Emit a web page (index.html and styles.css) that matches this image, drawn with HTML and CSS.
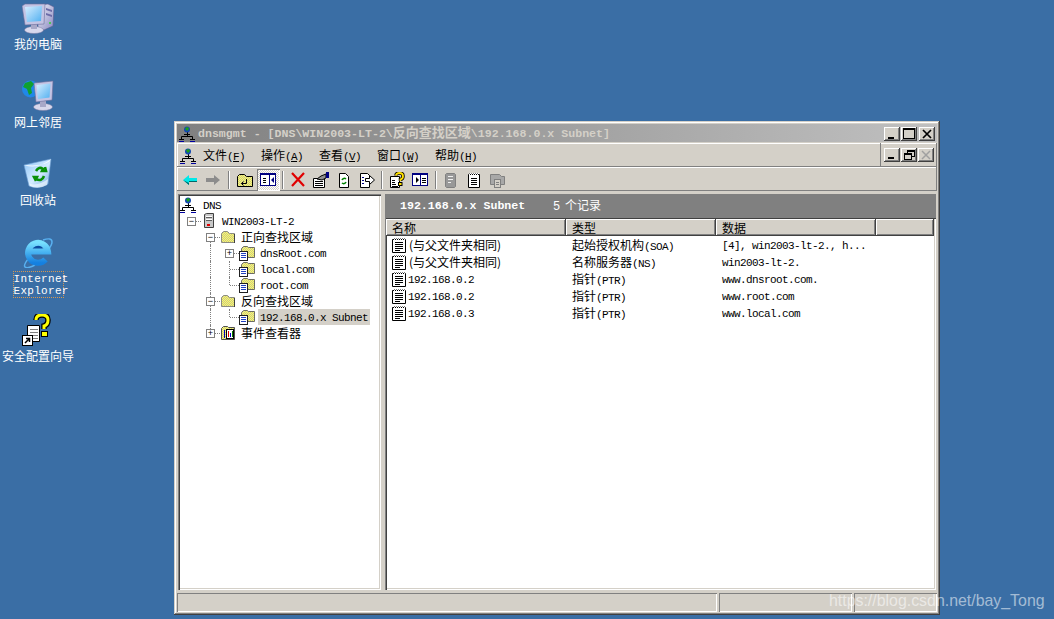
FILE: index.html
```html
<!DOCTYPE html>
<html lang="zh">
<head>
<meta charset="utf-8">
<title>dnsmgmt</title>
<link rel="stylesheet" href="styles.css">
</head>
<body>
<svg class="defs" width="0" height="0" aria-hidden="true">
  <defs>
    <pattern id="dither" width="2" height="2" patternUnits="userSpaceOnUse">
      <rect width="2" height="2" fill="#ffff66"/><rect width="1" height="1" fill="#c8c48c"/><rect x="1" y="1" width="1" height="1" fill="#c8c48c"/>
    </pattern>
    <pattern id="spiral" width="2" height="2" patternUnits="userSpaceOnUse">
      <rect width="2" height="2" fill="#fff"/><rect width="1" height="1" fill="#000"/><rect x="1" y="1" width="1" height="1" fill="#808080"/>
    </pattern>
    <linearGradient id="scr" x1="0" y1="0" x2="1" y2="1"><stop offset="0" stop-color="#d8eeff"/><stop offset="1" stop-color="#50b0f0"/></linearGradient>
    <linearGradient id="case" x1="0" y1="0" x2="1" y2="1"><stop offset="0" stop-color="#f0f0fa"/><stop offset="1" stop-color="#8a8ac0"/></linearGradient>
    <linearGradient id="bin" x1="0" y1="0" x2="1" y2="1"><stop offset="0" stop-color="#8cc4f8"/><stop offset=".55" stop-color="#d4ecff"/><stop offset="1" stop-color="#6ca4e0"/></linearGradient>
    <linearGradient id="ie" x1="0" y1="0" x2="0" y2="1"><stop offset="0" stop-color="#78e0ff"/><stop offset="1" stop-color="#1480e0"/></linearGradient>

    <symbol id="i-net" viewBox="0 0 16 16">
      <path d="M8.500 6v4M2.500 13V10.500h11V13" fill="none" stroke="#000"/>
      <circle cx="8" cy="3.500" r="3" fill="#1448b0"/><path d="M6 2l3-1 1 2-2 2-1-1z" fill="#18a018"/>
      <path d="M0 13h5v1H0zM11 13h5v1h-5zM5 8h6v1H5z" fill="#000"/><path d="M0 15h5v1H0zM11 15h5v1h-5z" fill="#0000a0"/>
    </symbol>
    <symbol id="i-server" viewBox="0 0 16 16">
      <path d="M3.500 1.500l2-1h7v14h-9z" fill="#c8c8c8" stroke="#404040"/>
      <path d="M5 3h6v1H5zM5 6h6v1H5z" fill="#fff"/><path d="M5 4h6v1H5zM5 7h6v1H5z" fill="#606060"/>
      <rect x="6" y="11" width="3" height="2" fill="#e00000"/>
    </symbol>
    <symbol id="i-folder" viewBox="0 0 16 16">
      <path d="M1.500 4.500l2-2h4l2 2h5v9h-13z" fill="url(#dither)" stroke="#8c8c80"/>
      <path d="M14.500 5v9" stroke="#404040"/>
    </symbol>
    <symbol id="i-zone" viewBox="0 0 16 16">
      <path d="M2.500 3.500l2-2h4l1 1h6v10h-13z" fill="url(#dither)" stroke="#6c6c64"/>
      <rect x=".5" y="6.500" width="8" height="9" fill="#fff" stroke="#202020"/>
      <path d="M2 8.500h5M2 10.500h5M2 12.500h5" stroke="#2040c0"/>
    </symbol>
    <symbol id="i-event" viewBox="0 0 16 16">
      <path d="M1.500 3.500l2-2h4l1 1h6v12h-13z" fill="url(#dither)" stroke="#50504c"/>
      <rect x="6.500" y="4.500" width="7" height="9" fill="#fff" stroke="#000"/>
      <path d="M8.500 6v6" stroke="#e00000"/><path d="M10.500 8v4" stroke="#0000c0"/><path d="M12.500 6v6" stroke="#008000"/><path d="M4.500 5v8" stroke="#0000c0"/>
    </symbol>
    <symbol id="i-rec" viewBox="0 0 16 16">
      <path d="M1.500 2.500h13v13h-13z" fill="#fff" stroke="#000"/>
      <rect x="2" y="1" width="12" height="2" fill="url(#spiral)"/>
      <path d="M4 5.500h8M4 7.500h8M4 9.500h8M4 11.500h8M4 13.500h5" stroke="#000"/>
    </symbol>
    <symbol id="t-back" viewBox="0 0 16 16"><path d="M1 8l6-5v3h8v4H7v3z" fill="#00e8e8"/><path d="M1 8l6 5v-3h8V9H7v2z" fill="#006868"/></symbol>
    <symbol id="t-fwd" viewBox="0 0 16 16"><path d="M15 8L9 3v3H1v4h8v3z" fill="#8c8c8c"/></symbol>
    <symbol id="t-up" viewBox="0 0 16 16">
      <path d="M.500 4.500l2-2h5l2 2h6v10H.500z" fill="url(#dither)" stroke="#000"/>
      <path d="M9.500 7v4.500h-5M6.500 9.500l-2 2 2 2" fill="none" stroke="#000"/>
    </symbol>
    <symbol id="t-tree" viewBox="0 0 16 16">
      <rect x=".500" y="1.500" width="15" height="12" fill="#fff" stroke="#000080"/><path d="M1 1h14v2H1z" fill="#000080"/><path d="M9.500 3v10" stroke="#000080"/>
      <path d="M3 6.500h3M3 8.500h3M3 10.500h3" stroke="#000"/><path d="M14 5v6l-3-3z" fill="#000080"/>
    </symbol>
    <symbol id="t-x" viewBox="0 0 16 16"><path d="M2 1l12 13M14 1L2 14" stroke="#e00000" stroke-width="2.200"/></symbol>
    <symbol id="t-prop" viewBox="0 0 16 16">
      <path d="M.500 6.500h11v9H.500z" fill="#fff" stroke="#000"/><path d="M2 9.500h8M2 11.500h8M2 13.500h8" stroke="#000"/>
      <path d="M4 7l4-3 5-2v4l-4 2z" fill="#909090" stroke="#000"/><rect x="13" y="0" width="3" height="6" fill="#000080"/>
    </symbol>
    <symbol id="t-refresh" viewBox="0 0 16 16">
      <path d="M3.500 1.500h6l3 3v11h-9z" fill="#fff" stroke="#000"/>
      <path d="M6 8a2.500 2.500 0 0 1 4-1M10 10a2.500 2.500 0 0 1-4 1" fill="none" stroke="#008000" stroke-width="1.500"/>
    </symbol>
    <symbol id="t-export" viewBox="0 0 16 16">
      <path d="M1.500 1.500h7l2 2v12h-9z" fill="#fff" stroke="#000"/><path d="M3 5.500h2M3 8.500h2M3 11.500h2" stroke="#000080"/>
      <path d="M6.500 6.500h4v-3l5 4.500-5 4.500v-3h-4z" fill="#fff" stroke="#000"/>
    </symbol>
    <symbol id="t-help" viewBox="0 0 16 16">
      <path d="M1.500 4.500h9v11h-9z" fill="#fff" stroke="#000"/><path d="M3 8.500h3M3 10.500h3M3 12.500h4M3 14.500h6" stroke="#000"/>
      <path d="M7 3.500Q7 1 10.500 1T14 4t-2.500 3.500V9" fill="none" stroke="#000" stroke-width="3.500"/>
      <path d="M7 3.500Q7 1 10.500 1T14 4t-2.500 3.500V9" fill="none" stroke="#ffe000" stroke-width="1.800"/>
      <rect x="9.500" y="10.500" width="3.500" height="3" fill="#ffe000" stroke="#000"/>
    </symbol>
    <symbol id="t-pane" viewBox="0 0 16 16">
      <rect x=".500" y="1.500" width="15" height="12" fill="#fff" stroke="#000080"/><path d="M1 1h14v2H1z" fill="#000080"/><path d="M8.500 3v10" stroke="#000080"/>
      <path d="M4 5v6l3-3z" fill="#000"/><path d="M10 6.500h4M10 8.500h4M10 10.500h4" stroke="#000"/>
    </symbol>
    <symbol id="t-d1" viewBox="0 0 16 16"><path d="M3.500 1.500h8l1 1v12l-1 1h-8l-1-1v-12z" fill="#989898" stroke="#808080"/><path d="M5 4.500h5M5 7.500h5M5 10.500h3" stroke="#f0f0f0"/></symbol>
    <symbol id="t-d2" viewBox="0 0 16 16"><path d="M2.500 2.500h11v13h-11z" fill="#fff" stroke="#000"/><rect x="3" y="1" width="10" height="2" fill="url(#spiral)"/><path d="M5 6.500h6M5 8.500h6M5 10.500h6M5 12.500h6" stroke="#000"/></symbol>
    <symbol id="t-d3" viewBox="0 0 16 16"><path d="M1.500 2.500h9l2 2h3v8h-14z" fill="#a8a8a8" stroke="#808080"/><rect x="5.500" y="7.500" width="6" height="8" fill="#d4d0c8" stroke="#808080"/><path d="M7 10.500h3M7 12.500h3" stroke="#808080"/></symbol>

    <symbol id="d-computer" viewBox="0 0 32 32">
      <path d="M16 3l10-1 6 3-1 19-9 4-6-2z" fill="url(#case)" stroke="#5a5a90" stroke-width=".6"/>
      <path d="M24 6l6 2v2l-6-2zM24 11l6 2v2l-6-2z" fill="#6c6ca8"/>
      <circle cx="28" cy="21" r="1" fill="#30d030"/>
      <ellipse cx="12" cy="28" rx="9.500" ry="3.500" fill="#d8d8ec" stroke="#7878a0" stroke-width=".5"/>
      <path d="M9 21h6v6H9z" fill="#a8a8c8"/>
      <path d="M0 4l3-2 20 0-1 20-19 1z" fill="#c4c4e4" stroke="#6c6c98" stroke-width=".6"/>
      <path d="M3 5l17-1-1 15-14 1z" fill="url(#scr)"/>
    </symbol>
    <symbol id="d-net" viewBox="0 0 32 32">
      <circle cx="8.500" cy="9" r="8.500" fill="#2088e8"/>
      <path d="M3 3l6-2 3 3-3 4 1 5-3 2-2-6-4-2z" fill="#10a030"/>
      <ellipse cx="21" cy="27" rx="9.500" ry="3.500" fill="#d8d8ec" stroke="#7878a0" stroke-width=".5"/>
      <path d="M18 21h6v6h-6z" fill="#a8a8c8"/>
      <path d="M12 3l19-2-1 19-16 2z" fill="#c4c4e4" stroke="#6c6c98" stroke-width=".6"/>
      <path d="M14.500 5l14-1.500-1 14-11.500 1.500z" fill="url(#scr)"/>
    </symbol>
    <symbol id="d-bin" viewBox="0 0 32 32">
      <path d="M2 7L29 1l-3 25q-10 6-19 2z" fill="url(#bin)" stroke="#6c9cd0" stroke-width=".6"/>
      <path d="M2 7q13 5 27-6-4 8-27 6z" fill="#f4faff"/>
      <path d="M8 26q9 2 18-5l-1 6q-9 5-17 1z" fill="#f0f8ff" opacity=".7"/>
      <path d="M14 13q3-5 7-2l-1 2h4l-1-4M22 18q-2 6-8 3l1-2h-3l2 4" fill="none" stroke="#089008" stroke-width="2.600"/>
    </symbol>
    <symbol id="d-ie" viewBox="0 0 32 32">
      <path d="M21 4q9-3 9 2 0 3-4 8M7 22q-6 7-4 9 2 2 10-2" fill="none" stroke="#58b0f0" stroke-width="1.500"/>
      <circle cx="15.500" cy="11.500" r="5" fill="#0c4ca0"/>
      <path d="M5 15.500h21a10 10 0 1 0-2.500 8" fill="none" stroke="url(#ie)" stroke-width="6"/>
    </symbol>
    <symbol id="d-wiz" viewBox="0 0 32 32">
      <path d="M5.500 11.500h12v16h-12z" fill="#fff" stroke="#000"/><path d="M8 15.500h8M8 18.500h8M8 21.500h8M8 24.500h8" stroke="#808080"/>
      <path d="M14 6Q14 1 20 1t6 5-4 6v3" fill="none" stroke="#000" stroke-width="5.500"/>
      <path d="M14 6Q14 1 20 1t6 5-4 6v3" fill="none" stroke="#ffff00" stroke-width="3"/>
      <rect x="19.500" y="17.500" width="6" height="5" fill="#ffff00" stroke="#000"/>
      <rect x="0" y="21" width="11" height="11" fill="#000"/><rect x="1" y="22" width="9" height="9" fill="#fff"/>
      <path d="M3 29l4-4M4 24.500h3.500V28" fill="none" stroke="#000" stroke-width="1.500"/>
    </symbol>
  </defs>
</svg>

<main class="desktop">
  <div class="desk-item"><svg class="desk-icon"><use href="#d-computer"/></svg><span class="desk-label">我的电脑</span></div>
  <div class="desk-item"><svg class="desk-icon"><use href="#d-net"/></svg><span class="desk-label">网上邻居</span></div>
  <div class="desk-item"><svg class="desk-icon"><use href="#d-bin"/></svg><span class="desk-label">回收站</span></div>
  <div class="desk-item"><svg class="desk-icon"><use href="#d-ie"/></svg><span class="desk-label desk-focus">Internet<br>Explorer</span></div>
  <div class="desk-item"><svg class="desk-icon"><use href="#d-wiz"/></svg><span class="desk-label">安全配置向导</span></div>

  <section class="window">
    <header class="titlebar">
      <svg class="ic16"><use href="#i-net"/></svg>
      <span class="title-text">dnsmgmt - [DNS\WIN2003-LT-2\<span class="title-cjk">反向查找区域</span>\192.168.0.x Subnet]</span>
      <div class="caption-btns">
        <button class="cap"><svg width="10" height="10"><path d="M1 8h6v2H1z"/></svg></button>
        <button class="cap"><svg width="12" height="11"><path d="M0 0h12v11H0zM1 2v8h10V2z" fill-rule="evenodd"/></svg></button>
        <button class="cap cap-close"><svg width="10" height="10"><path d="M1 1l8 8M9 1l-8 8" stroke="#000" stroke-width="1.700"/></svg></button>
      </div>
    </header>

    <div class="menubar">
      <nav class="menu">
        <svg class="ic16"><use href="#i-net"/></svg>
        <span class="menu-item">文件<span class="lat">(<u>F</u>)</span></span>
        <span class="menu-item">操作<span class="lat">(<u>A</u>)</span></span>
        <span class="menu-item">查看<span class="lat">(<u>V</u>)</span></span>
        <span class="menu-item">窗口<span class="lat">(<u>W</u>)</span></span>
        <span class="menu-item">帮助<span class="lat">(<u>H</u>)</span></span>
      </nav>
      <div class="mdi-btns">
        <button class="cap"><svg width="10" height="10"><path d="M1 7h6v2H1z"/></svg></button>
        <button class="cap"><svg width="11" height="10"><path d="M3 0h8v7H8v3H0V3h3zM4 2v1h4v3h2V2zM1 5v4h6V5z" fill-rule="evenodd"/></svg></button>
        <button class="cap"><svg width="10" height="10"><path d="M1 1l8 8M9 1l-8 8" stroke="#a0a0a0" stroke-width="1.500"/></svg></button>
      </div>
    </div>

    <div class="toolbar">
      <span class="tool"><svg class="ic16"><use href="#t-back"/></svg></span>
      <span class="tool"><svg class="ic16"><use href="#t-fwd"/></svg></span>
      <i class="sep sep-wide"></i>
      <span class="tool"><svg class="ic16"><use href="#t-up"/></svg></span>
      <span class="tool tool-on"><svg class="ic16"><use href="#t-tree"/></svg></span>
      <i class="sep"></i>
      <span class="tool"><svg class="ic16"><use href="#t-x"/></svg></span>
      <span class="tool"><svg class="ic16"><use href="#t-prop"/></svg></span>
      <span class="tool"><svg class="ic16"><use href="#t-refresh"/></svg></span>
      <span class="tool"><svg class="ic16"><use href="#t-export"/></svg></span>
      <i class="sep"></i>
      <span class="tool"><svg class="ic16"><use href="#t-help"/></svg></span>
      <span class="tool"><svg class="ic16"><use href="#t-pane"/></svg></span>
      <i class="sep sep-mid"></i>
      <span class="tool"><svg class="ic16"><use href="#t-d1"/></svg></span>
      <span class="tool"><svg class="ic16"><use href="#t-d2"/></svg></span>
      <span class="tool"><svg class="ic16"><use href="#t-d3"/></svg></span>
    </div>

    <div class="content">
      <aside class="tree">
        <div class="row row-root"><svg class="ic16"><use href="#i-net"/></svg><span class="label lat">DNS</span></div>
        <div class="row"><span class="cell"><b class="box">−</b><i class="hline"></i></span><svg class="ic16"><use href="#i-server"/></svg><span class="label lat">WIN2003-LT-2</span></div>
        <div class="row"><span class="cell"></span><span class="cell cell-top"><b class="box">−</b><i class="hline"></i></span><svg class="ic16"><use href="#i-folder"/></svg><span class="label">正向查找区域</span></div>
        <div class="row"><span class="cell"></span><span class="cell cell-v"></span><span class="cell"><b class="box">+</b><i class="hline"></i></span><svg class="ic16"><use href="#i-zone"/></svg><span class="label lat">dnsRoot.com</span></div>
        <div class="row"><span class="cell"></span><span class="cell cell-v"></span><span class="cell cell-v"><i class="hline"></i></span><svg class="ic16"><use href="#i-zone"/></svg><span class="label lat">local.com</span></div>
        <div class="row"><span class="cell"></span><span class="cell cell-v"></span><span class="cell cell-end"><i class="hline"></i></span><svg class="ic16"><use href="#i-zone"/></svg><span class="label lat">root.com</span></div>
        <div class="row"><span class="cell"></span><span class="cell cell-v"><b class="box">−</b><i class="hline"></i></span><svg class="ic16"><use href="#i-folder"/></svg><span class="label">反向查找区域</span></div>
        <div class="row"><span class="cell"></span><span class="cell cell-v"></span><span class="cell cell-end"><i class="hline"></i></span><svg class="ic16"><use href="#i-zone"/></svg><span class="label lat label-sel">192.168.0.x Subnet</span></div>
        <div class="row"><span class="cell"></span><span class="cell cell-end"><b class="box">+</b><i class="hline"></i></span><svg class="ic16"><use href="#i-event"/></svg><span class="label">事件查看器</span></div>
      </aside>

      <div class="detail">
        <div class="banner"><span class="banner-name">192.168.0.x Subnet</span><span class="banner-count"><span class="banner-num">5</span> 个记录</span></div>
        <div class="list">
          <div class="list-head">
            <span class="col col-name">名称</span><span class="col col-type">类型</span><span class="col col-data">数据</span><span class="col col-fill"></span>
          </div>
          <div class="rec">
            <span class="col-name rec-name"><svg class="ic16"><use href="#i-rec"/></svg><span class="rec-paren">(与父文件夹相同)</span></span>
            <span class="col-type rec-type">起始授权机构<span class="lat">(SOA)</span></span>
            <span class="col-data rec-data lat">[4], win2003-lt-2., h...</span>
          </div>
          <div class="rec">
            <span class="col-name rec-name"><svg class="ic16"><use href="#i-rec"/></svg><span class="rec-paren">(与父文件夹相同)</span></span>
            <span class="col-type rec-type">名称服务器<span class="lat">(NS)</span></span>
            <span class="col-data rec-data lat">win2003-lt-2.</span>
          </div>
          <div class="rec">
            <span class="col-name rec-name"><svg class="ic16"><use href="#i-rec"/></svg><span class="lat">192.168.0.2</span></span>
            <span class="col-type rec-type">指针<span class="lat">(PTR)</span></span>
            <span class="col-data rec-data lat">www.dnsroot.com.</span>
          </div>
          <div class="rec">
            <span class="col-name rec-name"><svg class="ic16"><use href="#i-rec"/></svg><span class="lat">192.168.0.2</span></span>
            <span class="col-type rec-type">指针<span class="lat">(PTR)</span></span>
            <span class="col-data rec-data lat">www.root.com</span>
          </div>
          <div class="rec">
            <span class="col-name rec-name"><svg class="ic16"><use href="#i-rec"/></svg><span class="lat">192.168.0.3</span></span>
            <span class="col-type rec-type">指针<span class="lat">(PTR)</span></span>
            <span class="col-data rec-data lat">www.local.com</span>
          </div>
        </div>
      </div>
    </div>

    <footer class="statusbar">
      <span class="pane pane-a"></span><span class="pane pane-b"></span><span class="pane pane-c"></span>
    </footer>
  </section>

  <div class="watermark">https://blog.csdn.net/bay_Tong</div>
</main>
</body>
</html>
```
FILE: styles.css
```css
* { box-sizing: border-box; }
html, body { margin: 0; padding: 0; height: 100%; overflow: hidden; }
body {
  background: #3a6ea5;
  color: #000;
  font: 12px/16px "Noto Sans CJK SC", "Liberation Sans", sans-serif;
}
.defs { position: absolute; }
.ic16 { width: 16px; height: 16px; flex: none; display: block; }

/* latin text in the old fixed-pitch look */
.lat {
  font-family: "Liberation Mono", "Noto Sans CJK SC", monospace;
  font-size: 11px;
  letter-spacing: -0.6px;
}

/* desktop */
.desktop {
  position: relative;
  width: 1054px;
  height: 619px;
  padding-top: 2px;
  display: flex;
  flex-direction: column;
}
.desk-item {
  width: 76px;
  height: 78px;
  display: flex;
  flex-direction: column;
  align-items: center;
  color: #fff;
}
.desk-icon { width: 32px; height: 32px; flex: none; }
.desk-label { margin-top: 3px; line-height: 14px; text-align: center; white-space: nowrap; }
.desk-focus {
  margin-top: 3px;
  padding: 1px 0 0;
  line-height: 12px;
  height: 27px;
  width: 51px;
  border: 1px dotted #d89850;
  font-family: "Liberation Mono", monospace;
  font-size: 11px;
  letter-spacing: 0.3px;
}

/* window */
.window {
  position: absolute;
  left: 174px;
  top: 121px;
  width: 766px;
  height: 494px;
  padding: 3px;
  display: flex;
  flex-direction: column;
  background: #d4d0c8;
  box-shadow: inset -1px -1px 0 #404040, inset 1px 1px 0 #d4d0c8, inset -2px -2px 0 #808080, inset 2px 2px 0 #fff;
}
.titlebar {
  height: 18px;
  flex: none;
  display: flex;
  align-items: center;
  padding: 1px 2px 0 2px;
  background: linear-gradient(90deg, #808080, #c0c0c0);
}
.title-text {
  margin-left: 3px;
  color: #d4d0c8;
  font: bold 11.6px/16px "Liberation Mono", "Noto Sans CJK SC", monospace;
  white-space: nowrap;
}
.title-cjk { font-size: 13px; }
.caption-btns { margin-left: auto; display: flex; gap: 1px; }
.cap {
  width: 16px;
  height: 14px;
  padding: 0;
  border: 0;
  display: flex;
  align-items: center;
  justify-content: center;
  background: #d4d0c8;
  box-shadow: inset -1px -1px 0 #404040, inset 1px 1px 0 #fff, inset -2px -2px 0 #808080;
}
.cap-close { margin-left: 1px; }

.menubar { height: 24px; margin-top: 1px; flex: none; display: flex; }
.menu {
  flex: 1;
  display: flex;
  align-items: center;
  padding: 1px 0 0 3px;
  box-shadow: inset -1px -1px 0 #808080, inset 1px 1px 0 #fff;
}
.menu-item { width: 58px; white-space: nowrap; }
.menu-item:first-of-type { margin-left: 7px; }
.mdi-btns {
  width: 56px;
  display: flex;
  align-items: center;
  justify-content: flex-end;
  gap: 1px;
  padding-right: 3px;
  box-shadow: inset -1px -1px 0 #808080, inset 0 1px 0 #fff;
}

.toolbar {
  height: 24px;
  flex: none;
  display: flex;
  align-items: center;
  padding: 1px 0 0 1.500px;
  box-shadow: inset -1px -1px 0 #808080, inset 1px 1px 0 #fff;
}
.tool {
  width: 23px;
  height: 22px;
  display: flex;
  align-items: center;
  justify-content: center;
  flex: none;
}
.tool-on {
  background: repeating-conic-gradient(#fff 0 25%, #d4d0c8 0 50%) 0 0 / 2px 2px;
  box-shadow: inset 1px 1px 0 #808080, inset -1px -1px 0 #fff;
}
.sep { width: 7px; height: 18px; flex: none; display: flex; justify-content: center; }
.sep::after { content: ""; width: 2px; height: 18px; background: linear-gradient(90deg, #808080 50%, #fff 50%); }
.sep-wide { width: 9px; }
.sep-mid { width: 8px; }

.content { flex: 1; min-height: 0; display: flex; gap: 4px; margin-top: 3px; padding: 0 1px; }

/* tree */
.tree {
  width: 203px;
  flex: none;
  background: #fff;
  padding: 3px 0 0 4px;
  box-shadow: inset 1px 1px 0 #808080, inset 2px 2px 0 #404040, inset -1px -1px 0 #fff, inset -2px -2px 0 #d4d0c8;
}
.row { height: 16px; display: flex; align-items: center; white-space: nowrap; }
.row-root { margin-left: -2px; }
.row-root .label { margin-left: 7px; }
.label { margin-left: 5px; }
.label.lat { padding-top: 2px; }
.label.label-sel {
  background: #d4d0c8;
  margin-left: 3px;
  padding: 0 2px;
  height: 16px;
  width: 112px;
  line-height: 18px;
}
.cell { width: 19px; height: 16px; flex: none; position: relative; display: block; }
.cell-v::before, .cell-end::before, .cell-top::before {
  content: "";
  position: absolute;
  left: 9px;
  top: 0;
  height: 16px;
  border-left: 1px dotted #808080;
}
.cell-end::before { height: 8px; }
.cell-top::before { top: 8px; height: 8px; }
.hline {
  position: absolute;
  left: 10px;
  top: 8px;
  width: 9px;
  border-top: 1px dotted #808080;
}
.box {
  position: absolute;
  left: 5px;
  top: 4px;
  width: 9px;
  height: 9px;
  z-index: 1;
  border: 1px solid #808080;
  background: #fff;
  font: 400 9px/7px "Liberation Sans", sans-serif;
  text-align: center;
  color: #000;
}

/* detail */
.detail { flex: 1; min-width: 0; display: flex; flex-direction: column; }
.banner {
  height: 23px;
  flex: none;
  display: flex;
  align-items: center;
  background: #808080;
  color: #fff;
  padding: 1px 0 0 15px;
}
.banner-name {
  width: 153px;
  font: bold 11.6px/16px "Liberation Mono", monospace;
}
.banner-num { font-family: "Liberation Mono", monospace; margin-right: 2px; }
.list {
  flex: 1;
  min-height: 0;
  background: #fff;
  padding: 1px 2px 2px 1px;
  box-shadow: inset 1px 1px 0 #808080, inset 2px 2px 0 #404040, inset -1px -1px 0 #fff, inset -2px -2px 0 #d4d0c8;
}
.list-head { height: 17px; margin-top: 1px; display: flex; background: #d4d0c8; }
.col {
  height: 17px;
  line-height: 17px;
  padding-left: 6px;
  background: #d4d0c8;
  box-shadow: inset -1px -1px 0 #404040, inset 1px 1px 0 #fff, inset -2px -2px 0 #808080;
}
.col-name { width: 180px; flex: none; }
.col-type { width: 150px; flex: none; }
.col-data { width: 160px; flex: none; }
.col-fill { flex: 1; }
.rec { height: 17px; display: flex; align-items: center; white-space: nowrap; }
.rec-name { display: flex; align-items: center; padding-left: 5px; gap: 1px; }
.rec-name .lat { padding-top: 2px; }
.rec-paren { margin-left: 1px; }
.rec-type { padding: 2px 0 0 6px; }
.rec-data { padding: 2px 0 0 6px; }

/* status bar */
.statusbar { height: 19px; flex: none; display: flex; gap: 2px; margin-top: 3px; }
.pane { height: 19px; box-shadow: inset 1px 1px 0 #808080, inset -1px -1px 0 #fff; }
.pane-a { width: 540px; }
.pane-b { width: 133px; }
.pane-c { flex: 1; }

.watermark {
  position: absolute;
  left: 829px;
  top: 591px;
  color: rgba(255, 255, 255, 0.55);
  font: 15.9px/20px "Liberation Sans", sans-serif;
  white-space: nowrap;
}
```
